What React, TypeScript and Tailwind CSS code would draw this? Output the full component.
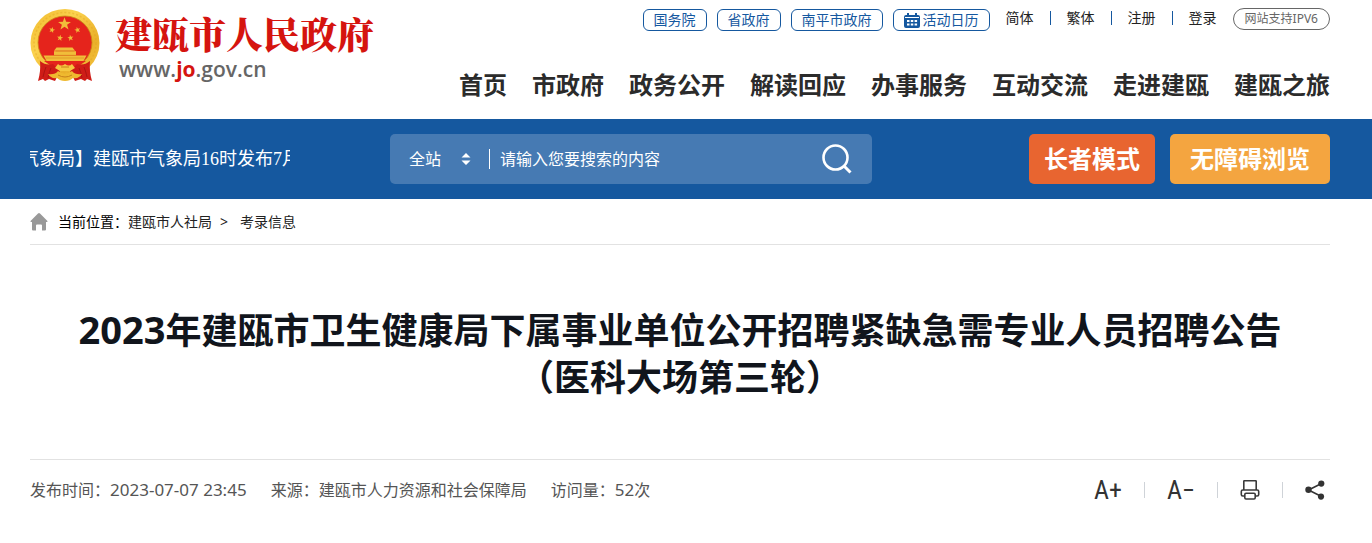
import React, { useState } from 'react';

const portalLinks = ['国务院', '省政府', '南平市政府'];
const userLinks = ['简体', '繁体', '注册', '登录'];
const navItems = ['首页', '市政府', '政务公开', '解读回应', '办事服务', '互动交流', '走进建瓯', '建瓯之旅'];

const STAR = '0,-10 2.4,-3.2 9.5,-3.1 3.8,1.2 5.9,8.1 0,4 -5.9,8.1 -3.8,1.2 -9.5,-3.1 -2.4,-3.2';

function Emblem() {
  return (
    <svg viewBox="0 0 70 74" className="h-[74px] w-[70px] shrink-0" aria-hidden="true">
      <defs>
        <linearGradient id="gold" x1="0" y1="0" x2="1" y2="1">
          <stop offset="0" stopColor="#efb92c" />
          <stop offset="0.35" stopColor="#fbd24e" />
          <stop offset="0.7" stopColor="#eab02a" />
          <stop offset="1" stopColor="#f6c944" />
        </linearGradient>
      </defs>
      <ellipse cx="35" cy="35" rx="34.5" ry="34" fill="url(#gold)" />
      <ellipse cx="35" cy="35" rx="31" ry="30.5" fill="none" stroke="#e0a01f" strokeWidth="1.5" strokeDasharray="2 2" opacity="0.4" />
      <ellipse cx="35" cy="34.5" rx="27" ry="26.5" fill="#e5241c" stroke="#c98a17" strokeWidth="0.8" />
      <g fill="#f1bd3a">
        <polygon points={STAR} transform="translate(34.500 16) scale(0.68)" />
        <polygon points={STAR} transform="translate(22 22) rotate(15) scale(0.32)" />
        <polygon points={STAR} transform="translate(47.500 22) rotate(-15) scale(0.32)" />
        <polygon points={STAR} transform="translate(30 30) rotate(10) scale(0.32)" />
        <polygon points={STAR} transform="translate(40.500 30) rotate(-10) scale(0.32)" />
        <path d="M26.500 39.500h16l2.500 3.200h-21z" />
        <path d="M24 43.200h22v4h-22z" />
        <path d="M13.500 47.500h43l-3 5.500h-37z" />
      </g>
      <path d="M26 43h18M24 47.300h22M16 50h38" stroke="#d58b1b" strokeWidth="0.6" />
      <path d="M14 53h42L47 59 35 62 23 59z" fill="#e5241c" />
      <path d="M10 53q6 5 13 3l7 7-5 10-6-2-4 2-2-2-5 2q3-10 2-20z" fill="#cf1c17" />
      <path d="M60 53q-6 5-13 3l-7 7 5 10 6-2 4 2 2-2 5 2q-3-10-2-20z" fill="#cf1c17" />
      <path d="M16 59q-2 5-3 10M21 60q-2 4-3 10M54 59q2 5 3 10M49 60q2 4 3 10" fill="none" stroke="#a81311" strokeWidth="0.9" />
      <path d="M28 56q3 3 7 0 4 3 7 0l3 4-5 3h-10l-5-3z" fill="#f5c840" />
      <path d="M18 66q7 1 10-3 7 5 14 0 3 4 10 3-3 5-9 4-3 3-8 3t-8-3q-6 1-9-4z" fill="#efb92f" />
      <path d="M28 67q7 4 14 0M31 59h8" fill="none" stroke="#c8811a" strokeWidth="1" />
    </svg>
  );
}

function CalendarIcon() {
  return (
    <svg viewBox="0 0 16 15" className="h-[15px] w-4" aria-hidden="true">
      <path d="M2 2h1V0h2v2h6V0h2v2h1q2 0 2 2v9q0 2-2 2H2q-2 0-2-2V4q0-2 2-2z" fill="#15589f" />
      <path d="M1 4.500h14" stroke="#fff" strokeWidth="1" />
      <path d="M3 8h2.500M6.800 8h2.500M10.600 8h2.500M3 11.500h2.500M6.800 11.500h2.500M10.600 11.500h2.500" stroke="#fff" strokeWidth="2" />
    </svg>
  );
}

function PrinterIcon() {
  return (
    <svg viewBox="0 0 20 20" className="h-5 w-5" fill="none" stroke="#3a3a3a" strokeWidth="1.6" aria-hidden="true">
      <path d="M3.800 10V1.300q0-.5.5-.5h11.400q.5 0 .5.5V10" />
      <path d="M4.500 16H2.800q-1.500 0-1.500-1.500v-3q0-1.500 1.500-1.500h14.400q1.500 0 1.500 1.500v3q0 1.500-1.500 1.500h-1.700" />
      <rect x="4.800" y="13.200" width="10.400" height="5.800" rx="1.200" />
    </svg>
  );
}

function ShareIcon() {
  return (
    <svg viewBox="0 0 20 20" className="h-5 w-5" aria-hidden="true">
      <path d="M16.500 3.500 3.500 10l13 6.500" fill="none" stroke="#333" strokeWidth="1.600" />
      <circle cx="16.300" cy="3.600" r="3.100" fill="#333" />
      <circle cx="3.500" cy="9.800" r="3.200" fill="#333" />
      <circle cx="16" cy="16.600" r="3.100" fill="#333" />
    </svg>
  );
}

function Divider() {
  return <span className="h-4 w-px bg-[#cfd3d8]" />;
}

function Header() {
  return (
    <header className="flex h-[119px] items-start justify-between pl-[30px] pr-[42px]">
      <a href="#" className="flex shrink-0 items-start gap-[15px] pt-2">
        <Emblem />
        <span className="flex flex-col">
          <span className="font-['Noto_Serif_CJK_SC','Noto_Sans_CJK_SC',serif] text-[37px] font-black leading-[50px] text-[#d5140f]">
            建瓯市人民政府
          </span>
          <span className="pl-1 font-['Open_Sans',sans-serif] text-[21px] font-semibold leading-[22px] text-[#666]">
            www.<span className="font-bold text-[#d5140f]">jo</span>.gov.cn
          </span>
        </span>
      </a>
      <div className="flex flex-col items-end pt-2">
        <div className="flex items-start text-sm">
          <div className="flex gap-2.5 pt-px">
            {portalLinks.map((label) => (
              <a
                key={label}
                href="#"
                className="flex h-[22px] items-center rounded-md border border-[#15589f] px-2.5 leading-5 text-[#15589f]"
              >
                {label}
              </a>
            ))}
            <a
              href="#"
              className="flex h-[22px] items-center gap-[3px] rounded-md border border-[#15589f] px-2.5 leading-5 text-[#15589f]"
            >
              <CalendarIcon />
              活动日历
            </a>
          </div>
          <div className="ml-4 flex items-center gap-4">
            {userLinks.map((label, index) => (
              <React.Fragment key={label}>
                {index > 0 ? <span className="h-3.5 w-px bg-[#15589f]" /> : null}
                <a href="#" className="leading-5 text-[#222]">
                  {label}
                </a>
              </React.Fragment>
            ))}
          </div>
          <a
            href="#"
            className="ml-4 flex h-[22px] items-center rounded-full border border-[#666] px-[11px] text-xs text-[#666]"
          >
            网站支持IPV6
          </a>
        </div>
        <nav className="mt-9 flex gap-[25px] text-2xl font-bold leading-9 text-[#2b2b2b]">
          {navItems.map((item) => (
            <a key={item} href="#" className="whitespace-nowrap">
              {item}
            </a>
          ))}
        </nav>
      </div>
    </header>
  );
}

function SearchBar() {
  const [keyword, setKeyword] = useState('');

  return (
    <form
      onSubmit={(event) => event.preventDefault()}
      className="ml-[100px] flex h-[50px] w-[482px] items-center rounded-[5px] bg-[#467ab3] pl-[19px] pr-5 text-base text-white"
    >
      <label className="flex items-center">
        <select
          aria-label="搜索范围"
          className="w-[52px] appearance-none bg-transparent leading-6 text-white outline-none"
        >
          <option>全站</option>
        </select>
        <svg viewBox="0 0 10 12" className="h-3 w-2.5" fill="#fff" aria-hidden="true">
          <path d="M0.500 4.500 5 0l4.500 4.500zM0.500 7.500 5 12l4.500-4.500z" />
        </svg>
      </label>
      <span className="ml-[18px] h-5 w-px bg-white" />
      <input
        type="text"
        aria-label="搜索"
        value={keyword}
        onChange={(e) => setKeyword(e.target.value)}
        placeholder="请输入您要搜索的内容"
        className="ml-2.5 min-w-0 flex-1 bg-transparent leading-6 outline-none placeholder:text-white"
      />
      <button type="submit" aria-label="提交搜索">
        <svg viewBox="0 0 30 30" className="h-[30px] w-[30px]" fill="none" stroke="#fff" strokeWidth="2.600" aria-hidden="true">
          <circle cx="13.500" cy="13.500" r="12" />
          <path d="m22 22 6.500 6.500" strokeWidth="3" />
        </svg>
      </button>
    </form>
  );
}

export default function App() {
  return (
    <div className="bg-white font-['Noto_Sans','Noto_Sans_CJK_SC',sans-serif]" lang="zh-CN">
      <Header />

      <section className="flex h-20 items-center bg-[#15589f] pl-[30px] pr-[42px]">
        <div className="w-[260px] overflow-hidden font-['Liberation_Serif','Noto_Sans_CJK_SC',serif] text-lg text-white">
          <p className="-ml-[9px] whitespace-nowrap">气象局】建瓯市气象局16时发布7月</p>
        </div>
        <SearchBar />
        <div className="ml-auto flex gap-[15px] text-2xl font-bold text-white">
          <button type="button" className="h-[50px] rounded-[5px] bg-[#e86530] px-[15px]">
            长者模式
          </button>
          <button type="button" className="h-[50px] rounded-[5px] bg-[#f4a540] px-5">
            无障碍浏览
          </button>
        </div>
      </section>

      <main className="pl-[30px] pr-[42px]">
        <div className="flex h-[46px] items-center border-b border-[#e2e2e2] text-sm text-[#222]">
          <svg viewBox="0 0 18 18" className="mr-2.5 h-[18px] w-[18px]" fill="#999" aria-hidden="true">
            <path d="M9 0q.5 0 1 .5l7.200 7.300q1 1.200-.4 1.200H16v7.500q0 1-1 1h-3v-5q0-1-1-1H7q-1 0-1 1v5H3q-1 0-1-1V9h-.8q-1.400 0-.4-1.200L8 .5q.5-.5 1-.5z" />
          </svg>
          <span className="text-black">当前位置：</span>
          <a href="#">建瓯市人社局</a>
          <span className="px-2">&gt;</span>
          <a href="#" className="ml-1">
            考录信息
          </a>
        </div>

        <h1 className="pb-[58px] pt-[61px] text-center text-4xl font-bold leading-[47px] text-[#11151c]">
          <span className="text-[38px]">2023</span>年建瓯市卫生健康局下属事业单位公开招聘紧缺急需专业人员招聘公告
          <br />
          （医科大场第三轮）
        </h1>

        <div className="flex items-center justify-between border-t border-[#e2e2e2] pt-4 text-base text-[#555]">
          <div className="flex items-center gap-6 leading-7">
            <p>
              发布时间：<span className="text-[17px]">2023-07-07 23:45</span>
            </p>
            <p>来源：建瓯市人力资源和社会保障局</p>
            <p>
              访问量：<span className="text-[17px]">52</span>次
            </p>
          </div>
          <div className="flex items-center gap-[22px] pr-[5px] font-['Roboto_Condensed','Roboto',sans-serif] text-[26px] leading-7 text-[#333]">
            <button type="button" aria-label="放大字体">
              A+
            </button>
            <Divider />
            <button type="button" aria-label="缩小字体">
              A−
            </button>
            <Divider />
            <button type="button" aria-label="打印">
              <PrinterIcon />
            </button>
            <Divider />
            <button type="button" aria-label="分享">
              <ShareIcon />
            </button>
          </div>
        </div>
      </main>
    </div>
  );
}
